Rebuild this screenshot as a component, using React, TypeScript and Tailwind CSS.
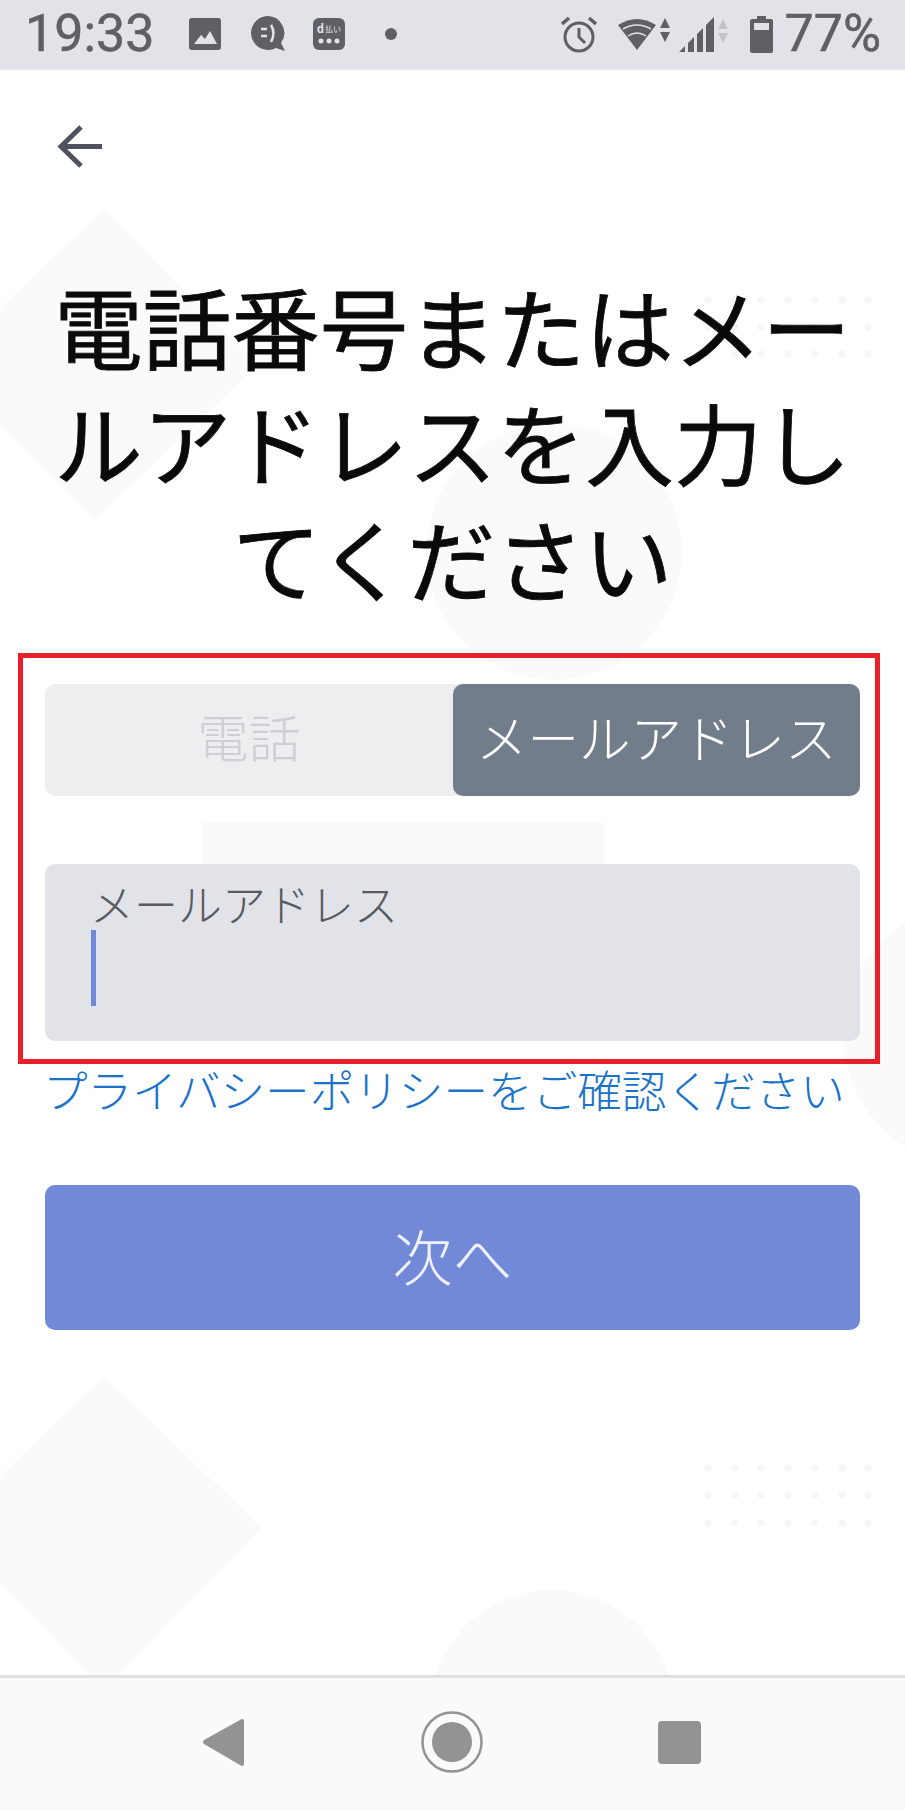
import React from "react";

const jpFont = "font-['Noto_Sans_CJK_JP','Noto_Sans_CJK_SC',sans-serif]";
const dotXs = [708, 735, 761, 788, 815, 842, 868];

const Backdrop: React.FC = () => (
  <svg className="absolute left-0 top-0" width="905" height="1810" viewBox="0 0 905 1810">
    <g fill="#fafafa">
      <polygon points="104,209 258,365 95,520 -60,365" />
      <circle cx="554" cy="552" r="128" />
      <rect x="203" y="822" width="401" height="100" />
      <circle cx="975" cy="1035" r="132" />
      <polygon points="104,1376 262,1528 104,1690 -54,1528" />
      <circle cx="552" cy="1712" r="122" />
    </g>
    <g fill="#f6f6f6">
      {[300, 327, 354, 1468, 1495, 1523].map((y) =>
        dotXs.map((x) => <circle key={`${x}-${y}`} cx={x} cy={y} r="3.5" />)
      )}
    </g>
  </svg>
);

const StatusBar: React.FC = () => (
  <div className="relative flex h-[70px] shrink-0 items-start justify-between border-b-2 border-[#e8e8e8] bg-[#e2e3e8] pl-[25px] pr-[24px] font-['Roboto',sans-serif] text-[52px] leading-[68px] text-[#5f6064]">
    <div className="flex h-[68px] items-center">
      <span className="[-webkit-text-stroke:0.5px_#5f6064]">19:33</span>
      <svg className="ml-[34px]" width="32" height="32" viewBox="0 0 32 32">
        <rect width="32" height="32" rx="3" fill="#5f6064" />
        <path d="M5 26 L12 17 L16 21 L21 13 L28 26 Z" fill="#e2e3e8" />
      </svg>
      <svg className="ml-[29px]" width="35" height="36" viewBox="0 0 35 36">
        <path d="M17 0 A17 17 0 0 1 31 27 L35 35 L26 32 A17 17 0 1 1 17 0 Z" fill="#5f6064" />
        <path d="M11 13 H17 M11 20 H17" stroke="#e2e3e8" strokeWidth="2.5" />
        <path d="M21 9 Q26 17 21 26" stroke="#e2e3e8" strokeWidth="2.5" fill="none" />
      </svg>
      <svg className="ml-[28px]" width="32" height="32" viewBox="0 0 32 32">
        <rect width="32" height="32" rx="6" fill="#5f6064" />
        <text x="4" y="15" fontSize="12" fontWeight="700" fill="#e2e3e8" fontFamily="Roboto, sans-serif">d</text>
        <text x="12" y="14" fontSize="8" fill="#e2e3e8" fontFamily="'Noto Sans CJK JP', sans-serif">払い</text>
        <circle cx="8" cy="23" r="2.5" fill="#e2e3e8" />
        <circle cx="16" cy="23" r="2.5" fill="#e2e3e8" />
        <circle cx="24" cy="23" r="2.5" fill="#e2e3e8" />
      </svg>
      <span className="ml-[40px] h-3 w-3 rounded-full bg-[#5f6064]" />
    </div>
    <div className="flex h-[68px] items-center">
      <svg width="36" height="37" viewBox="0 0 36 37">
        <circle cx="18" cy="21" r="14" fill="none" stroke="#5f6064" strokeWidth="3" />
        <path d="M18 12 V21 L24 27" fill="none" stroke="#5f6064" strokeWidth="3" />
        <path d="M1 8 L8 2 M35 8 L28 2" stroke="#5f6064" strokeWidth="3.5" />
      </svg>
      <svg className="ml-[21px]" width="52" height="32" viewBox="0 0 52 32">
        <path d="M0 7 Q19 -5 38 7 L19 32 Z" fill="#5f6064" />
        <path d="M5 11 Q19 3 33 11 M10 18 Q19 12 28 18" stroke="#e2e3e8" strokeWidth="1.5" fill="none" />
        <path d="M47 0 L52 10 H42 Z M47 24 L52 14 H42 Z" fill="#5f6064" />
      </svg>
      <svg className="ml-[9px]" width="49" height="35" viewBox="0 0 49 35">
        <path d="M0 35 L6 29 V35 Z M9 26 L15 20 V35 H9 Z M18 17 L24 11 V35 H18 Z M27 8 L35 0 V35 H27 Z" fill="#5f6064" />
        <path d="M44 2 L49 12 H39 Z M44 26 L49 16 H39 Z" fill="#c2c3c7" />
      </svg>
      <svg className="ml-[22px]" width="23" height="37" viewBox="0 0 23 37">
        <path d="M7 0 H16 V3 H21 A2 2 0 0 1 23 5 V35 A2 2 0 0 1 21 37 H2 A2 2 0 0 1 0 35 V5 A2 2 0 0 1 2 3 H7 Z" fill="#5f6064" />
        <rect x="4" y="7" width="15" height="7" fill="#e2e3e8" />
      </svg>
      <span className="ml-[11px] [-webkit-text-stroke:0.5px_#5f6064]">77%</span>
    </div>
  </div>
);

const NavBar: React.FC = () => (
  <div className="relative mt-auto flex h-[135px] shrink-0 items-start border-t-[3px] border-[#e0e0e0] bg-[#fafafa]/90">
    <svg className="ml-[203px] mt-[41px]" width="41" height="47" viewBox="0 0 41 47">
      <path d="M39 0 Q41 0 41 2 V45 Q41 47 39 47 Q38 47 37 46 L1 25 Q-1 23 1 21 L37 1 Q38 0 39 0 Z" fill="#939393" />
    </svg>
    <svg className="ml-[177px] mt-[33px]" width="62" height="62" viewBox="0 0 62 62">
      <circle cx="31" cy="31" r="29.5" fill="none" stroke="#939393" strokeWidth="2.5" />
      <circle cx="31" cy="31" r="20" fill="#939393" />
    </svg>
    <div className="ml-[175px] mt-[43px] h-[43px] w-[43px] rounded-[4px] bg-[#939393]" />
  </div>
);

export default function App() {
  return (
    <div className={`relative flex h-[1810px] w-[905px] flex-col overflow-hidden bg-white ${jpFont}`}>
      <Backdrop />
      <StatusBar />
      <div className="relative">
        <button className="ml-[57px] mt-[55px] block h-[43px] w-[45px]">
          <svg width="45" height="43" viewBox="0 0 45 43">
            <path d="M45 21.5 H4 M24 2 L4 21.5 L24 41" fill="none" stroke="#50525f" strokeWidth="5" />
          </svg>
        </button>
        <h1 className="mt-[98px] px-[46px] text-center text-[88.5px] font-normal leading-[116px] text-[#0a0a0a] [-webkit-text-stroke:0.8px_#0a0a0a]">
          電話番号またはメールアドレスを入力してください
        </h1>
        <div className="ml-[18px] mt-[39px] w-[862px] border-[5px] border-[#e8202a] pb-[18px] pl-[22px] pr-[15px] pt-[26px]">
          <div className="flex h-[112px] rounded-[10px] bg-[#edeef0]">
            <div className="flex w-1/2 items-center justify-center pb-[9px] text-[51.5px] font-light text-[#cdcfd3]">電話</div>
            <div className="flex w-1/2 items-center justify-center rounded-[10px] bg-[#727d8b] pb-[9px] text-[51.5px] font-light text-white">メールアドレス</div>
          </div>
          <div className="mt-[68px] h-[177px] rounded-[10px] bg-[#e2e3e8] pl-[46px] pt-[14px]">
            <p className="ml-[-1px] text-[44px] font-light leading-[50px] text-[#5a5b60]">メールアドレス</p>
            <div className="mt-[2px] h-[76px] w-[5px] bg-[#7289d8]" />
          </div>
        </div>
        <a className="ml-[43px] mt-[-3px] block text-[44.6px] font-light leading-[56px] text-[#1a73c9]">プライバシーポリシーをご確認ください</a>
        <button className="ml-[45px] mt-[68px] block h-[145px] w-[815px] rounded-[10px] bg-[#7289d8] pb-[6px] text-[60px] font-light text-[#eef1fb]">次へ</button>
      </div>
      <NavBar />
    </div>
  );
}
